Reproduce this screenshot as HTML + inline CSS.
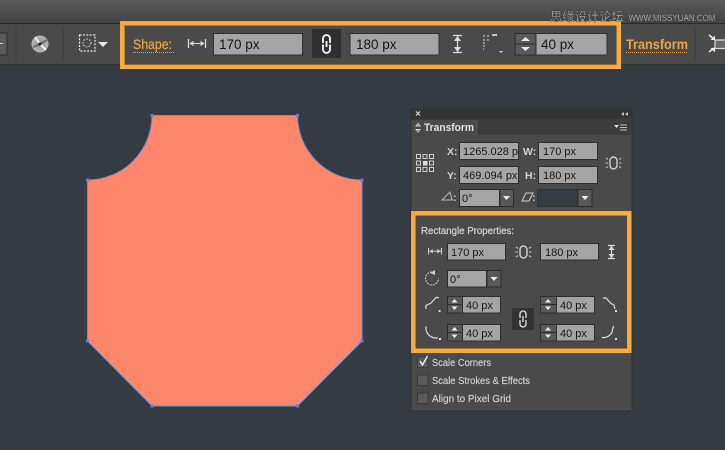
<!DOCTYPE html>
<html><head><meta charset="utf-8"><style>
html,body{margin:0;padding:0;background:#353b42;width:725px;height:450px;overflow:hidden}
svg{display:block;filter:blur(.3px)}
text{font-family:"Liberation Sans",sans-serif}
.f{fill:#a4a4a4;stroke:#2d2d2d;stroke-width:1}
.b{fill:#595959;stroke:#2d2d2d;stroke-width:1}
.t{fill:#161616;font-size:11px}
.T{fill:#161616;font-size:13.5px}
.l{fill:#d4d4d4;font-size:10.5px;stroke:#d4d4d4;stroke-width:.15}
.lb{fill:#d2d2d2;font-size:10.5px;font-weight:bold}
.i{fill:none;stroke:#dcdcdc;stroke-width:1.2}
.o{fill:none;stroke:#f6ab3c;stroke-width:4.5}
</style></head><body>
<svg width="725" height="450" viewBox="0 0 725 450" xmlns="http://www.w3.org/2000/svg">
<defs>
<linearGradient id="top" x1="0" y1="0" x2="0" y2="1"><stop offset="0" stop-color="#5a5a5a"/><stop offset="1" stop-color="#424242"/></linearGradient>
<radialGradient id="disc"><stop offset="0" stop-color="#555"/><stop offset=".25" stop-color="#999"/><stop offset="1" stop-color="#b8b8b8"/></radialGradient>
</defs>
<rect width="725" height="450" fill="#353b42"/>
<!-- top bars -->
<rect width="725" height="23" fill="url(#top)"/>
<rect y="23" width="725" height="1" fill="#2a2a2a"/>
<rect y="24" width="725" height="40" fill="#4a4a4a"/>
<rect y="64" width="725" height="1" fill="#333"/>
<!-- left toolbar -->
<rect x="-3" y="33" width="10" height="22" class="b"/>
<rect x="0" y="43" width="3" height="1" fill="#ccc"/>
<line x1="16" y1="28" x2="16" y2="60" stroke="#3d3d3d"/>
<circle cx="40" cy="44" r="8.5" fill="url(#disc)"/>
<path d="M40 44L35 37M40 44L46 50" stroke="#eee" stroke-width="2"/>
<path d="M40 44L33 47M40 44L47 40" stroke="#6a6a6a" stroke-width="2"/>
<circle cx="40" cy="44" r="1.500" fill="#222"/>
<line x1="63" y1="28" x2="63" y2="60" stroke="#3d3d3d"/>
<rect x="79.500" y="35" width="15.500" height="16" fill="none" stroke="#e8e8e8" stroke-width="1.200" stroke-dasharray="2 1.400"/>
<circle cx="87" cy="43" r="4" fill="none" stroke="#e0e0e0" stroke-dasharray="1.500 1.500"/>
<path d="M98 42h10l-5 5z" fill="#e8e8e8"/>
<!-- Shape -->
<text x="133" y="49" font-size="13.500" fill="#eba544" stroke="#eba544" stroke-width=".2" textLength="39" lengthAdjust="spacingAndGlyphs">Shape:</text>
<line x1="133" y1="52.500" x2="174" y2="52.500" stroke="#eba544" stroke-dasharray="1 1"/>
<path d="M188.500 39v9M205.500 39v9" stroke="#d8d8d8" stroke-width="1.300"/>
<path d="M190 43.500h14" stroke="#d8d8d8"/>
<path d="M189.500 43.500l4-2.800v5.600zM204.500 43.500l-4-2.800v5.600z" fill="#d8d8d8"/>
<rect x="213.500" y="33.500" width="89" height="21.500" class="f"/>
<text x="219" y="49" class="T">170 px</text>
<rect x="312" y="29" width="29" height="29" fill="#2f2f2f"/>
<path d="M323 43v-4.500a3.500 3.500 0 0 1 7 0v4.500M323 44.500v5a3.500 3.500 0 0 0 7 0v-5M326.500 41v6" fill="none" stroke="#e6e6e6" stroke-width="2"/>
<rect x="350" y="33.500" width="89" height="21.500" class="f"/>
<text x="356" y="49" class="T">180 px</text>
<path d="M453 35.500h9M453 52.500h9M457.500 36v16" class="i"/>
<path d="M457.500 36l-3.500 5h7zM457.500 52l-3.500-5h7z" fill="#dcdcdc"/>
<path d="M483 36h2M487 36h2M483 40h2M487 40h2M483 43h2M483 46h2M483 49h1" stroke="#bbb" stroke-width="1.200"/>
<path d="M492 35h5" stroke="#eee" stroke-width="1.500"/>
<path d="M499 51h4l-2 2z" fill="#ddd"/>
<rect x="515" y="33.500" width="21" height="21.500" class="b"/>
<line x1="515" y1="44" x2="536" y2="44" stroke="#2d2d2d"/>
<path d="M521 41l4.500-4 4.500 4zM521 47l4.500 4 4.500-4z" fill="#e8e8e8"/>
<rect x="536" y="33.500" width="71" height="21.500" class="f"/>
<text x="541" y="49" class="T">40 px</text>
<!-- right toolbar -->
<text x="626" y="49" font-size="13.500" font-weight="bold" fill="#eba544" textLength="62" lengthAdjust="spacingAndGlyphs">Transform</text>
<line x1="626" y1="52.500" x2="688" y2="52.500" stroke="#eba544" stroke-dasharray="1 1"/>
<line x1="695" y1="28" x2="695" y2="60" stroke="#3d3d3d"/>
<rect x="715" y="40" width="12" height="8.500" fill="#6a6a6a" stroke="#ddd" stroke-width="1.200"/>
<path d="M709 35l5 4M709 52l5-4" stroke="#eee" stroke-width="1.500"/>
<path d="M715 40v-4.500l-4.500 4.500zM715 48v4.500l-4.500-4.500z" fill="#f0f0f0"/>
<!-- orange top -->
<rect x="122.300" y="23.300" width="496.500" height="43.500" class="o"/>
<!-- watermark -->
<text x="550" y="21" font-size="12.300" fill="#d8d8d8" stroke="#222" stroke-width=".35" style="font-family:'Liberation Sans','Noto Sans CJK SC',sans-serif">思缘设计论坛</text>
<text x="628.500" y="21" font-size="9.500" fill="#d4d4d4" stroke="#222" stroke-width=".2" textLength="87" lengthAdjust="spacingAndGlyphs">WWW.MISSYUAN.COM</text>
<!-- shape -->
<path d="M152 115.500H297.500A64.500 64.500 0 0 0 362 180V341L297.500 406H152L87.500 341V180A64.500 64.500 0 0 0 152 115.500Z" fill="#fe876b" stroke="#6f8fd8" stroke-width="1"/>
<g fill="#5f83d8"><rect x="150.500" y="114" width="3" height="3"/><rect x="296" y="114" width="3" height="3"/><rect x="86" y="178.500" width="3" height="3"/><rect x="360.500" y="178.500" width="3" height="3"/><rect x="86" y="339.500" width="3" height="3"/><rect x="360.500" y="339.500" width="3" height="3"/><rect x="150.500" y="404.500" width="3" height="3"/><rect x="296" y="404.500" width="3" height="3"/></g>
<!-- panel -->
<rect x="411" y="109" width="221" height="302" fill="#4a4a4a" stroke="#2c3035"/>
<rect x="411" y="109" width="221" height="10" fill="#343434"/>
<rect x="411" y="119" width="221" height="16" fill="#3c3c3c"/>
<rect x="412" y="120" width="66" height="16" fill="#4a4a4a"/>
<path d="M416 111.500l4 4M420 111.500l-4 4" stroke="#ddd" stroke-width="1.100"/>
<path d="M624 112l-3 2 3 2zM628 112l-3 2 3 2z" fill="#bbb"/>
<path d="M418 123.500l2 2.500h-4zM418 132l2-2.500h-4z" fill="none" stroke="#ddd" stroke-width=".9"/>
<text x="424" y="131" font-size="11" font-weight="bold" fill="#e2e2e2" textLength="50" lengthAdjust="spacingAndGlyphs">Transform</text>
<path d="M614 125h5l-2.500 3z" fill="#ddd"/>
<path d="M620 125h7M620 127.500h7M620 130h7" stroke="#bbb"/>
<!-- ref point -->
<g fill="none" stroke="#ddd" stroke-width=".9"><rect x="416.500" y="154.500" width="4" height="4"/><rect x="423" y="154.500" width="4" height="4"/><rect x="429.500" y="154.500" width="4" height="4"/><rect x="416.500" y="161" width="4" height="4"/><rect x="429.500" y="161" width="4" height="4"/><rect x="416.500" y="167.500" width="4" height="4"/><rect x="423" y="167.500" width="4" height="4"/><rect x="429.500" y="167.500" width="4" height="4"/></g>
<rect x="423" y="161" width="4.500" height="4.500" fill="#ddd"/>
<!-- XYWH -->
<text x="447" y="155" class="lb">X:</text>
<text x="447" y="179" class="lb">Y:</text>
<text x="523" y="155" class="lb">W:</text>
<text x="525" y="179" class="lb">H:</text>
<rect x="459.500" y="142.500" width="59" height="17" class="f"/><text x="463" y="155" class="t">1265.028 p</text>
<rect x="459.500" y="166.500" width="59" height="17" class="f"/><text x="463" y="179" class="t">469.094 px</text>
<rect x="538.500" y="142.500" width="59" height="17" class="f"/><text x="543" y="155" class="t">170 px</text>
<rect x="538.500" y="166.500" width="59" height="17" class="f"/><text x="543" y="179" class="t">180 px</text>
<rect x="610" y="157" width="7" height="12" rx="3.500" fill="none" stroke="#ddd" stroke-width="1.300"/>
<path d="M606 158l2 1.500M605.500 163h2.500M606 168l2-1.500M621 158l-2 1.500M621.500 163h-2.500M621 168l-2-1.500" stroke="#ccc"/>
<path d="M442 200l8-8 2 8zM442 200h11" fill="none" stroke="#bbb"/><text x="453" y="201" class="lb">:</text>
<rect x="459.500" y="189.500" width="40" height="17" class="f"/><text x="462" y="202" class="t">0°</text>
<rect x="500" y="189.500" width="13.500" height="17" class="b"/><path d="M503 196h7l-3.500 4z" fill="#eee"/>
<path d="M522 201l4-8h7l-4 8z" fill="none" stroke="#ccc"/><text x="532" y="201" class="lb">:</text>
<rect x="537.500" y="189.500" width="40" height="17" fill="#363c43" stroke="#333"/>
<rect x="578" y="189.500" width="14" height="17" class="b"/><path d="M581.500 196h7l-3.500 4z" fill="#eee"/>
<!-- rect props -->
<text x="421" y="234" font-size="10.500" fill="#d2d2d2" stroke="#d2d2d2" stroke-width=".25" textLength="93" lengthAdjust="spacingAndGlyphs">Rectangle Properties:</text>
<path d="M428.500 248v6.500M441.500 248v6.500" stroke="#ccc" stroke-width="1.100"/>
<path d="M429 251.200h12" stroke="#ccc"/>
<path d="M429.500 251.200l3.300-2.300v4.600zM440.500 251.200l-3.300-2.300v4.600z" fill="#ccc"/>
<rect x="447.500" y="243.500" width="58" height="16.500" class="f"/><text x="451" y="256" class="t">170 px</text>
<rect x="520" y="246" width="7" height="12" rx="3.500" fill="none" stroke="#ddd" stroke-width="1.300"/>
<path d="M516 247l2 1.500M515.500 252h2.500M516 257l2-1.500M531 247l-2 1.500M531.500 252h-2.500M531 257l-2-1.500" stroke="#ccc"/>
<rect x="540.500" y="243.500" width="58" height="16.500" class="f"/><text x="545" y="256" class="t">180 px</text>
<path d="M608 245.500h7M608 258.500h7M611.500 246v12" class="i"/>
<path d="M611.500 246l-3 4h6zM611.500 258l-3-4h6z" fill="#ddd"/>
<path d="M432 272a6.500 6.500 0 1 0 6.500 6.500" fill="none" stroke="#ccc" stroke-dasharray="2 1"/>
<path d="M430 273l5-3v5z" fill="#ccc"/>
<rect x="447.500" y="270.500" width="39" height="16.500" class="f"/><text x="450" y="283" class="t">0°</text>
<rect x="487" y="270.500" width="14" height="16.500" class="b"/><path d="M490.500 277h7l-3.500 4z" fill="#eee"/>
<!-- corner rows -->
<rect x="447.500" y="296.500" width="15" height="16.500" class="b"/><line x1="447" y1="304.500" x2="462" y2="304.500" stroke="#2d2d2d"/><path d="M451.500 302.500l3-3.500 3 3.500zM451.500 306.500l3 3.500 3-3.500z" fill="#eee"/>
<rect x="462.500" y="296.500" width="38" height="16.500" class="f"/><text x="466" y="309" class="t">40 px</text>
<rect x="447.500" y="324.500" width="15" height="16.500" class="b"/><line x1="447" y1="332.500" x2="462" y2="332.500" stroke="#2d2d2d"/><path d="M451.500 330.500l3-3.500 3 3.500zM451.500 334.500l3 3.500 3-3.500z" fill="#eee"/>
<rect x="462.500" y="324.500" width="38" height="16.500" class="f"/><text x="466" y="337" class="t">40 px</text>
<rect x="540.500" y="296.500" width="16" height="16.500" class="b"/><line x1="540" y1="304.500" x2="556" y2="304.500" stroke="#2d2d2d"/><path d="M545 302.500l3-3.500 3 3.500zM545 306.500l3 3.500 3-3.500z" fill="#eee"/>
<rect x="556.500" y="296.500" width="38" height="16.500" class="f"/><text x="560" y="309" class="t">40 px</text>
<rect x="540.500" y="324.500" width="16" height="16.500" class="b"/><line x1="540" y1="332.500" x2="556" y2="332.500" stroke="#2d2d2d"/><path d="M545 330.500l3-3.500 3 3.500zM545 334.500l3 3.500 3-3.500z" fill="#eee"/>
<rect x="556.500" y="324.500" width="38" height="16.500" class="f"/><text x="560" y="337" class="t">40 px</text>
<path d="M426 309v-3.500l3-1.500 2-1 5-5.500h3" class="i"/><rect x="438.500" y="310" width="2" height="2" fill="#ddd"/>
<path d="M603 298h3l5 5.500 3 1.500 1 4" class="i"/><rect x="615" y="310" width="2" height="2" fill="#ddd"/>
<path d="M426 326.500v3a10 10 0 0 0 10 8.500h2" class="i"/><rect x="439" y="338" width="2" height="2" fill="#ddd"/>
<path d="M602 337.500h3a9 9 0 0 0 7.500-7.500l1-4" class="i"/><rect x="615" y="338" width="2" height="2" fill="#ddd"/>
<rect x="512" y="308" width="22" height="22" fill="#333"/>
<path d="M520 318v-4a3 3 0 0 1 6 0v4M520 320v4a3 3 0 0 0 6 0v-4M523 316v6" fill="none" stroke="#e4e4e4" stroke-width="1.300"/>
<!-- orange panel -->
<rect x="413.300" y="213.300" width="216" height="137.500" class="o"/>
<!-- checkboxes -->
<rect x="417.500" y="357" width="10.500" height="10.500" fill="#5a5a5a" stroke="#3a3a3a"/>
<path d="M420 361l2.500 4 5-9" fill="none" stroke="#f0f0f0" stroke-width="1.400"/>
<text x="432" y="366" class="l" textLength="59" lengthAdjust="spacingAndGlyphs">Scale Corners</text>
<rect x="417.500" y="375" width="10.500" height="10.500" fill="#5a5a5a" stroke="#3a3a3a"/>
<text x="432" y="384" class="l" textLength="98" lengthAdjust="spacingAndGlyphs">Scale Strokes &amp; Effects</text>
<rect x="417.500" y="393" width="10.500" height="10.500" fill="#5a5a5a" stroke="#3a3a3a"/>
<text x="432" y="402" class="l" textLength="79" lengthAdjust="spacingAndGlyphs">Align to Pixel Grid</text>
</svg>
</body></html>
